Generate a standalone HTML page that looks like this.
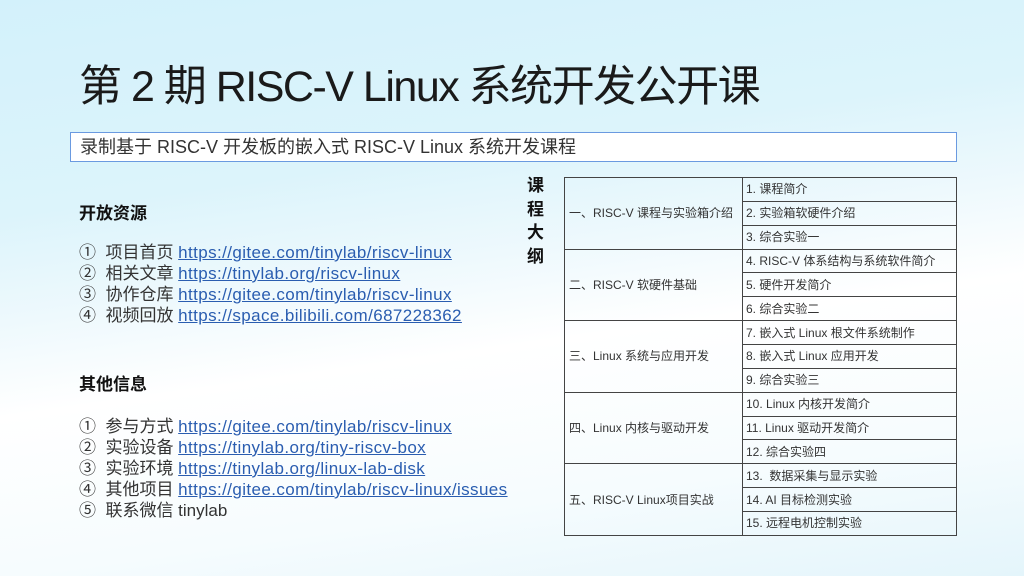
<!DOCTYPE html>
<html><head><meta charset="utf-8"><style>
body{margin:0;width:1024px;height:576px;overflow:hidden;font-family:"Liberation Sans","Noto Sans CJK SC",sans-serif;color:#222;
background:linear-gradient(172deg,#d3f1fb 0%,#dcf4fb 30%,#eef9fd 45%,#ffffff 58%,#f6fcfe 80%,#e4f5fb 100%);position:relative}
.a{position:absolute;white-space:nowrap}
h1{position:absolute;left:79px;top:52px;margin:0;font-weight:normal;font-size:43px;color:#1a1a1a;letter-spacing:-1.5px;white-space:nowrap}
.sub{position:absolute;left:70px;top:132px;width:876px;height:28px;border:1px solid #6a9ae0;background:#fff;font-size:18px;line-height:28px;padding-left:9px;color:#333;white-space:nowrap}
.h{font-weight:bold;font-size:17px;color:#111}
.li{font-size:17px;line-height:21px;color:#333}
.li a{color:#2a5db0;text-decoration:underline;letter-spacing:0.4px}
table{position:absolute;left:564px;top:177px;border-collapse:collapse;font-size:12px;color:#333}
tr{height:23.87px}
td{border:1px solid #444;padding:0 0 0 3px;line-height:14px;vertical-align:middle;white-space:nowrap}
td.l{width:173px;padding-left:4px}
td.r{width:210px}
.v{position:absolute;left:527px;top:174px;font-weight:bold;font-size:17px;line-height:23.5px;width:20px;color:#111}
</style></head><body>
<h1>第 2 期 RISC-V Linux 系统开发公开课</h1>
<div class="sub">录制基于 RISC-V 开发板的嵌入式 RISC-V Linux 系统开发课程</div>
<div class="a h" style="left:79px;top:199px">开放资源</div>
<div class="a li" style="left:79px;top:242px">①&nbsp; 项目首页 <a>https://gitee.com/tinylab/riscv-linux</a><br>②&nbsp; 相关文章 <a>https://tinylab.org/riscv-linux</a><br>③&nbsp; 协作仓库 <a>https://gitee.com/tinylab/riscv-linux</a><br>④&nbsp; 视频回放 <a>https://space.bilibili.com/687228362</a></div>
<div class="a h" style="left:79px;top:370px">其他信息</div>
<div class="a li" style="left:79px;top:416px">①&nbsp; 参与方式 <a>https://gitee.com/tinylab/riscv-linux</a><br>②&nbsp; 实验设备 <a>https://tinylab.org/tiny-riscv-box</a><br>③&nbsp; 实验环境 <a>https://tinylab.org/linux-lab-disk</a><br>④&nbsp; 其他项目 <a>https://gitee.com/tinylab/riscv-linux/issues</a><br>⑤&nbsp; 联系微信 tinylab</div>
<div class="v">课<br>程<br>大<br>纲</div>
<table>
<tr><td class="l" rowspan="3">一、RISC-V 课程与实验箱介绍</td><td class="r">1. 课程简介</td></tr>
<tr><td class="r">2. 实验箱软硬件介绍</td></tr>
<tr><td class="r">3. 综合实验一</td></tr>
<tr><td class="l" rowspan="3">二、RISC-V 软硬件基础</td><td class="r">4. RISC-V 体系结构与系统软件简介</td></tr>
<tr><td class="r">5. 硬件开发简介</td></tr>
<tr><td class="r">6. 综合实验二</td></tr>
<tr><td class="l" rowspan="3">三、Linux 系统与应用开发</td><td class="r">7. 嵌入式 Linux 根文件系统制作</td></tr>
<tr><td class="r">8. 嵌入式 Linux 应用开发</td></tr>
<tr><td class="r">9. 综合实验三</td></tr>
<tr><td class="l" rowspan="3">四、Linux 内核与驱动开发</td><td class="r">10. Linux 内核开发简介</td></tr>
<tr><td class="r">11. Linux 驱动开发简介</td></tr>
<tr><td class="r">12. 综合实验四</td></tr>
<tr><td class="l" rowspan="3">五、RISC-V Linux项目实战</td><td class="r">13.&nbsp; 数据采集与显示实验</td></tr>
<tr><td class="r">14. AI 目标检测实验</td></tr>
<tr><td class="r">15. 远程电机控制实验</td></tr>
</table>
</body></html>
